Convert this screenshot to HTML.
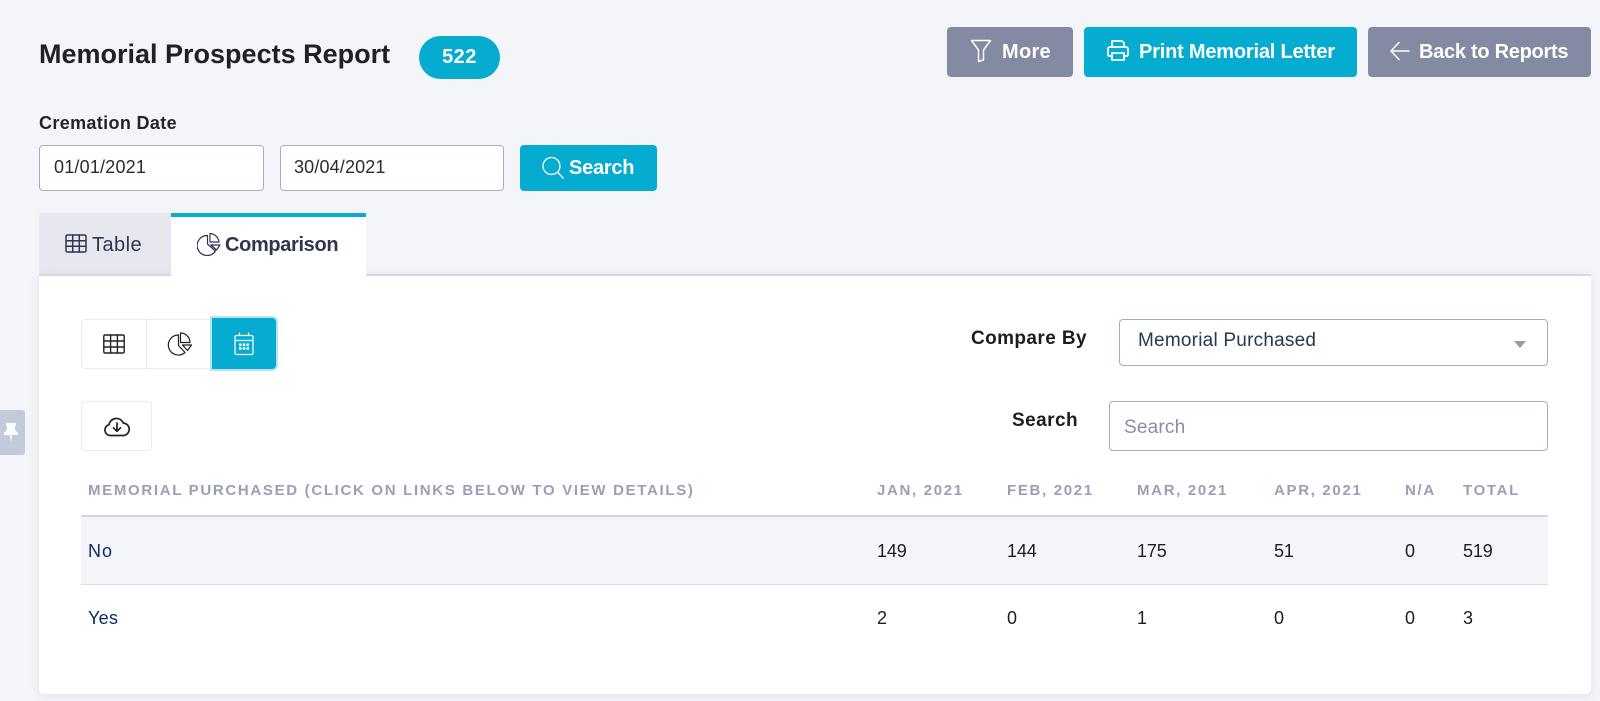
<!DOCTYPE html>
<html lang="en"><head><meta charset="utf-8"><title>Memorial Prospects Report</title>
<style>
html,body{margin:0;padding:0}
body{width:1600px;height:701px;background:#f3f5f9;position:relative;overflow:hidden;font-family:"Liberation Sans",sans-serif;color:#1f2229}
.a{position:absolute;box-sizing:border-box}
.t{position:absolute;white-space:nowrap;line-height:24px;height:24px}
.b{position:absolute;box-sizing:border-box;border-radius:4px}
.i{position:absolute;box-sizing:border-box;background:#fff;border:1px solid #a8adc6;border-radius:4px}
svg{position:absolute;fill:none;stroke-linecap:round;stroke-linejoin:round}
.h{font-size:15px;font-weight:700;color:#9a9fb8;letter-spacing:1.68px;top:479px}
.n{font-size:18px;color:#1c1e24;letter-spacing:-.15px}
.l{font-size:18px;color:#0c2a6b;letter-spacing:.3px}
</style></head><body>
<div class="t" style="left:39px;top:42px;font-size:27px;font-weight:700;color:#1e2127">Memorial Prospects Report</div>
<div class="b" style="left:419px;top:36px;width:81px;height:43px;border-radius:22px;background:#05acd0"></div>
<div class="t" style="left:419px;width:81px;text-align:center;top:45px;font-size:20px;font-weight:700;color:#fff;letter-spacing:.5px">522</div>

<div class="b" style="left:947px;top:27px;width:126px;height:50px;background:#848aa1"></div>
<svg style="left:969px;top:37.5px" width="24" height="26" viewBox="0 0 24 26" stroke="#fff" stroke-width="1.5"><path d="M2.500 2.500H21.500L14.500 12V22L9.500 23.500V12Z"/></svg>
<div class="t" style="left:1002px;top:40px;font-size:20px;font-weight:700;color:#fff;letter-spacing:.3px">More</div>

<div class="b" style="left:1084px;top:27px;width:273px;height:50px;background:#05acd0"></div>
<svg style="left:1106px;top:38px" width="24" height="25" viewBox="0 0 24 25" stroke="#fff" stroke-width="1.800"><path d="M6 9V3H16L18 5V9M6 18H3A1.500 1.500 0 0 1 2 16.500V11A2 2 0 0 1 4 9H20A2 2 0 0 1 22 11V16.500A1.500 1.500 0 0 1 20.500 18H18M6 15H18V22H6Z"/></svg>
<div class="t" style="left:1139px;top:40px;font-size:20px;font-weight:700;color:#fff;letter-spacing:-.2px">Print Memorial Letter</div>

<div class="b" style="left:1368px;top:27px;width:223px;height:50px;background:#848aa1"></div>
<svg style="left:1389px;top:40px" width="22" height="22" viewBox="0 0 22 22" stroke="#fff" stroke-width="1.500"><path d="M20 11H2M10 2.500L2 11L10 19.500"/></svg>
<div class="t" style="left:1419px;top:40px;font-size:20px;font-weight:700;color:#fff;letter-spacing:-.28px">Back to Reports</div>

<div class="t" style="left:39px;top:111px;font-size:18px;font-weight:700;color:#22252c;letter-spacing:.35px">Cremation Date</div>
<div class="i" style="left:39px;top:145px;width:225px;height:46px"></div>
<div class="t" style="left:54px;top:155px;font-size:18px;color:#2a2c33;letter-spacing:.2px">01/01/2021</div>
<div class="i" style="left:280px;top:145px;width:224px;height:46px"></div>
<div class="t" style="left:294px;top:155px;font-size:18px;color:#2a2c33;letter-spacing:.15px">30/04/2021</div>
<div class="b" style="left:520px;top:145px;width:137px;height:46px;background:#05acd0"></div>
<svg style="left:541px;top:156px" width="24" height="24" viewBox="0 0 24 24" stroke="#fff" stroke-width="1.300"><circle cx="10.500" cy="10" r="8.500"/><path d="M16.500 16L22 22"/></svg>
<div class="t" style="left:569px;top:156px;font-size:20px;font-weight:700;color:#fff;letter-spacing:-.25px">Search</div>

<div class="a" style="left:39px;top:213px;width:132px;height:61px;background:#e6e7ef"></div>
<svg style="left:65px;top:234px" width="22" height="20" viewBox="0 0 22 20" stroke="#2f3550" stroke-width="1.500"><rect x="1" y="1" width="20" height="17" rx="1.500"/><path d="M1 6.700H21M1 12.300H21M7.700 1V18M14.300 1V18"/></svg>
<div class="t" style="left:92px;top:233px;font-size:20px;color:#2f3550;letter-spacing:.45px">Table</div>
<div class="a" style="left:39px;top:274px;width:1552px;height:420px;background:#fff;border-top:2px solid #d5d7e3;border-radius:0 0 5px 5px;box-shadow:0 2px 10px rgba(120,125,160,.15)"></div>
<div class="a" style="left:171px;top:213px;width:195px;height:63px;background:#fff;border-top:4px solid #05acd0"></div>
<svg style="left:197px;top:232px" width="24" height="24" viewBox="0 0 24 24" stroke="#2f3550" stroke-width="1.200"><path d="M10.500 3.500A10 10 0 1 0 18.500 19L10.500 12Z"/><path d="M13 1.500A9.500 9.500 0 0 1 22 10H13Z"/><path d="M14 13H23L19.500 18Z"/></svg>
<div class="t" style="left:225px;top:233px;font-size:20px;font-weight:700;color:#2f3550;letter-spacing:-.35px">Comparison</div>

<div class="a" style="left:81px;top:319px;width:196px;height:50px;border:1px solid #e9eaf2;border-radius:4px"></div>
<div class="a" style="left:146px;top:319px;width:1px;height:50px;background:#e6e7f0"></div>
<div class="a" style="left:212px;top:318px;width:64px;height:51px;background:#05acd0;border-radius:0 4px 4px 0;box-shadow:0 0 0 2px #b3e6f1"></div>
<svg style="left:103px;top:334px" width="22" height="20" viewBox="0 0 22 20" stroke="#1f2229" stroke-width="1.400"><rect x=".8" y="1" width="20.400" height="18" rx="1.200"/><path d="M.8 7H21.200M.8 13H21.200M7.600 1V19M14.400 1V19"/></svg>
<svg style="left:167px;top:332px" width="26" height="24" viewBox="0 0 26 24" stroke="#1f2229" stroke-width="1.200"><path d="M11.500 3A10 10 0 1 0 18 20.500L11.500 13.500Z"/><path d="M13.500 1A9.500 9.500 0 0 1 23 10.500H13.500Z"/><path d="M15.500 13H24.500L20.500 18.500Z"/></svg>
<svg style="left:234px;top:332px" width="20" height="24" viewBox="0 0 20 24" stroke="#fff" stroke-width="1.200"><rect x="1" y="3.500" width="18" height="19" rx="1.500"/><path d="M1 8.500H19M5.500 1V3.500M14.500 1V3.500"/><path d="M5 12.800H7.500M8.800 12.800H11.300M12.500 12.800H15M5 16.500H7.500M8.800 16.500H11.300M12.500 16.500H15" stroke-width="2.600" stroke-linecap="butt"/></svg>

<div class="a" style="left:81px;top:401px;width:71px;height:50px;border:1px solid #e9eaf2;border-radius:4px"></div>
<svg style="left:103px;top:416px" width="28" height="21" viewBox="0 0 28 21" stroke="#1f2229" stroke-width="1.700"><path d="M7 19.500A5.500 5.500 0 0 1 6 8.700A7.500 7.500 0 0 1 20.300 7A6.300 6.300 0 0 1 21 19.500Z"/><path d="M14 7V15M10.500 11.800L14 15.300L17.500 11.800"/></svg>

<div class="a" style="left:0;top:410px;width:25px;height:45px;background:#c3cbdb;border-radius:0 3px 3px 0"></div>
<svg style="left:2px;top:422px" width="18" height="21" viewBox="0 0 18 21"><path fill="#fff" d="M4 1H14V3L13 4V8L16 11V13H10.200L9 20L7.800 13H2V11L5 8V4L4 3Z"/></svg>

<div class="t" style="left:971px;top:327px;font-size:19px;font-weight:700;color:#1b1d22;letter-spacing:.4px">Compare By</div>
<div class="i" style="left:1119px;top:319px;width:429px;height:47px"></div>
<div class="t" style="left:1138px;top:329px;font-size:19px;color:#24384f;letter-spacing:.22px">Memorial Purchased</div>
<div class="a" style="left:1514px;top:341px;width:0;height:0;border-left:6.500px solid transparent;border-right:6.500px solid transparent;border-top:7px solid #9a9a9a"></div>
<div class="t" style="left:1012px;top:409px;font-size:19px;font-weight:700;color:#1b1d22;letter-spacing:.45px">Search</div>
<div class="i" style="left:1109px;top:401px;width:439px;height:50px"></div>
<div class="t" style="left:1124px;top:416px;font-size:19px;color:#878da6;letter-spacing:.2px">Search</div>

<div class="t h" style="left:88px">MEMORIAL PURCHASED (CLICK ON LINKS BELOW TO VIEW DETAILS)</div>
<div class="t h" style="left:877px">JAN, 2021</div>
<div class="t h" style="left:1007px">FEB, 2021</div>
<div class="t h" style="left:1137px">MAR, 2021</div>
<div class="t h" style="left:1274px">APR, 2021</div>
<div class="t h" style="left:1405px">N/A</div>
<div class="t h" style="left:1463px">TOTAL</div>

<div class="a" style="left:81px;top:515px;width:1467px;height:70px;background:#f3f5f9;border-top:2px solid #d3d6e2;border-bottom:1px solid #d9dbe7"></div>
<div class="t l" style="left:88px;top:538.500px;letter-spacing:1px">No</div>
<div class="t n" style="left:877px;top:539px">149</div>
<div class="t n" style="left:1007px;top:539px">144</div>
<div class="t n" style="left:1137px;top:539px">175</div>
<div class="t n" style="left:1274px;top:539px">51</div>
<div class="t n" style="left:1405px;top:539px">0</div>
<div class="t n" style="left:1463px;top:539px">519</div>

<div class="t l" style="left:88px;top:606px">Yes</div>
<div class="t n" style="left:877px;top:606px">2</div>
<div class="t n" style="left:1007px;top:606px">0</div>
<div class="t n" style="left:1137px;top:606px">1</div>
<div class="t n" style="left:1274px;top:606px">0</div>
<div class="t n" style="left:1405px;top:606px">0</div>
<div class="t n" style="left:1463px;top:606px">3</div>
</body></html>
